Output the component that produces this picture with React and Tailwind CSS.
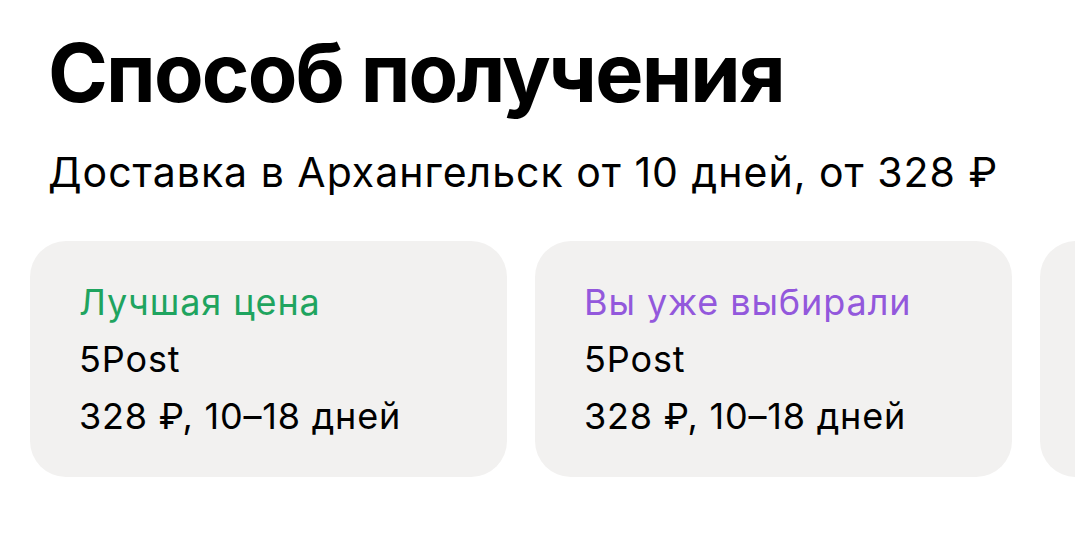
const options = [
  { tag: "Лучшая цена", tagClass: "text-[#1fa45f]", name: "5Post", info: "328 ₽, 10–18 дней" },
  { tag: "Вы уже выбирали", tagClass: "text-[#9358dc]", name: "5Post", info: "328 ₽, 10–18 дней" },
]

export default function App() {
  return (
    <div className="w-[1075px] h-[543px] overflow-hidden bg-white text-black font-['Inter','Roboto',sans-serif]">
      <div className="px-[48px] pt-[25px]">
        <h1 className="text-[81px] leading-[96px] font-bold tracking-[-1.8px]">Способ получения</h1>
        <p className="mt-[27px] text-[41px] leading-[48px] tracking-[1px]">Доставка в Архангельск от 10 дней, от 328 ₽</p>
      </div>
      <div className="flex gap-[28px] pl-[30px] mt-[45px]">
        {options.map((o, i) => (
          <div key={i} className="shrink-0 w-[477px] h-[236px] rounded-[36px] bg-[#f2f1f0] pl-[49px] pt-[39px]">
            <div className={`text-[36px] leading-[44px] tracking-[0.9px] ${o.tagClass}`}>{o.tag}</div>
            <div className="text-[36px] leading-[44px] tracking-[0.9px] mt-[13px]">{o.name}</div>
            <div className="text-[36px] leading-[44px] tracking-[0.8px] mt-[13px]">{o.info}</div>
          </div>
        ))}
        {/* next option peeking from the right edge */}
        <div className="shrink-0 w-[477px] h-[236px] rounded-[36px] bg-[#f2f1f0]" />
      </div>
    </div>
  )
}
